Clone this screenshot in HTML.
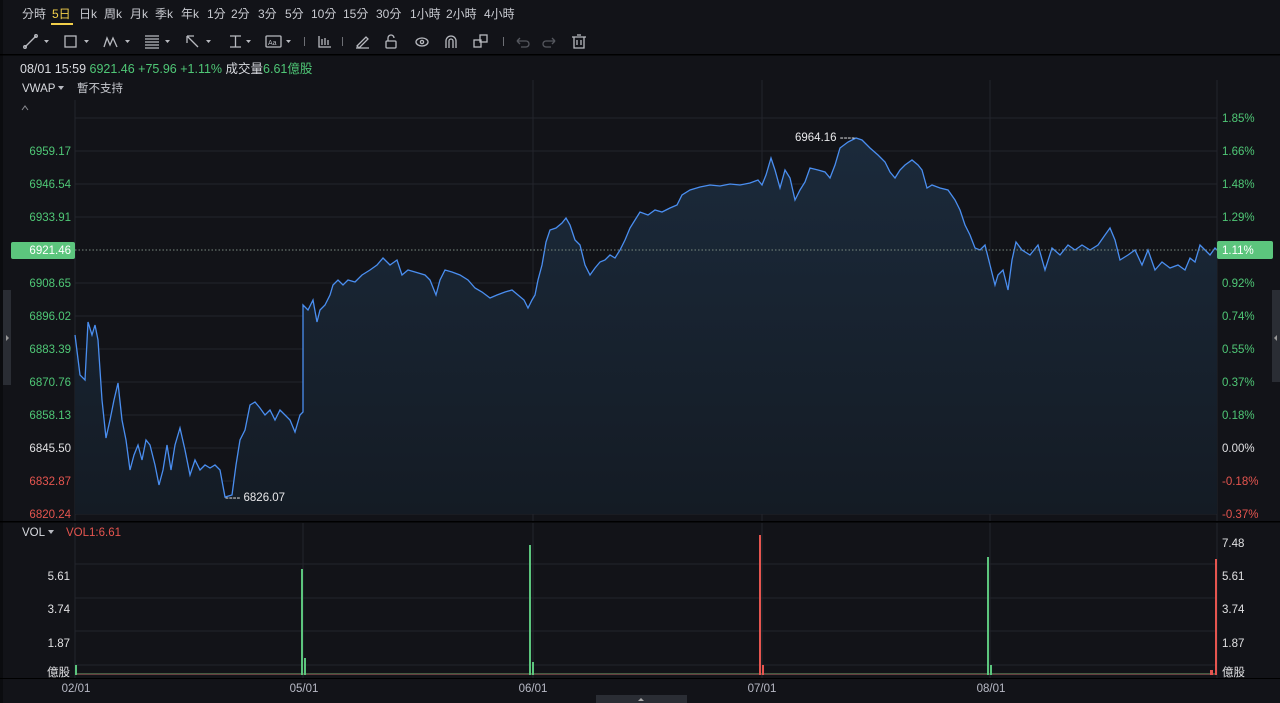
<!DOCTYPE html>
<html><head><meta charset="utf-8"><style>
html,body{margin:0;padding:0;background:#121318;width:1280px;height:703px;overflow:hidden;font-family:"Liberation Sans","Noto Sans CJK TC",sans-serif;}
svg{display:block}
text{font-family:"Liberation Sans","Noto Sans CJK TC",sans-serif;}
</style></head><body>
<svg width="1280" height="703" viewBox="0 0 1280 703" xmlns="http://www.w3.org/2000/svg">
<defs>
<linearGradient id="g" x1="0" y1="0" x2="0" y2="1"><stop offset="0" stop-color="#1b2a3b"/><stop offset="1" stop-color="#141b24"/></linearGradient>
</defs>
<rect width="1280" height="703" fill="#121318"/>
<rect x="0" y="0" width="3" height="703" fill="#0b0c0f"/>
<g font-size="12" fill="#c8cad0">
<text x="22" y="18">分時</text>
<text x="52" y="18" fill="#f2cf4a">5日</text>
<text x="79" y="18">日k</text><text x="104" y="18">周k</text><text x="130" y="18">月k</text><text x="155" y="18">季k</text><text x="181" y="18">年k</text>
<text x="207" y="18">1分</text><text x="231" y="18">2分</text><text x="258" y="18">3分</text><text x="285" y="18">5分</text><text x="311" y="18">10分</text><text x="343" y="18">15分</text><text x="376" y="18">30分</text><text x="410" y="18">1小時</text><text x="446" y="18">2小時</text><text x="484" y="18">4小時</text>
</g>
<rect x="51" y="23" width="22" height="2" fill="#f2cf4a"/>
<g stroke="#b8bac0" fill="none" stroke-width="1.3">
<path d="M25 47 L36 36"/><circle cx="25" cy="47" r="1.3"/><circle cx="36" cy="36" r="1.3"/>
<rect x="65" y="36" width="11" height="11"/>
<path d="M104 47 L107 38 L110 45 L113 38 L117 47"/>
<path d="M145 36 H159 M145 39 H159 M145 42 H159 M145 45 H159 M145 48 H159"/>
<path d="M187 36 L198 47 M187 36 V43 M187 36 H194"/>
<path d="M230 36 H241 M235.5 36 V47 M230 47 H241"/>
<rect x="266" y="36" width="15" height="11" rx="1"/>
<path d="M319 36 V47 H331 M322 39 V45 M325 38 V45 M328 40 V45"/>
<path d="M357 46 L366 37 L368 39 L359 48 Z M356 48 H369"/>
<rect x="386" y="41" width="10" height="7" rx="1"/><path d="M388 41 V38 A3 3 0 0 1 394 38"/>
<ellipse cx="422" cy="42" rx="6" ry="4"/><circle cx="422" cy="42" r="1.6"/>
<path d="M446 48 V41 A5 5 0 0 1 456 41 V48 M449 48 V41 A2 2 0 0 1 453 41 V48"/>
<rect x="474" y="40" width="7" height="7"/><rect x="480" y="35" width="7" height="7"/>
<path d="M574 37 V48 H584 V37 M572 37 H586 M577 35 H581 M577 40 V45 M581 40 V45"/>
</g>
<g stroke="#55575e" fill="none" stroke-width="1.3"><path d="M517 41 H526 A3 3 0 0 1 526 47 H521 M517 41 L520 38 M517 41 L520 44"/><path d="M555 41 H546 A3 3 0 0 0 546 47 H551 M555 41 L552 38 M555 41 L552 44"/></g>
<g fill="#b8bac0">
<path d="M44 40 h5 l-2.5 3z M84 40 h5 l-2.5 3z M125 40 h5 l-2.5 3z M165 40 h5 l-2.5 3z M206 40 h5 l-2.5 3z M246 40 h5 l-2.5 3z M286 40 h5 l-2.5 3z"/>
<text x="268" y="45" font-size="7">Aa</text></g>
<g fill="#6d6f75"><rect x="304" y="37" width="1" height="9"/><rect x="342" y="37" width="1" height="9"/><rect x="503" y="37" width="1" height="9"/></g>
<rect x="0" y="54" width="1280" height="1.5" fill="#000"/>
<text x="20" y="73" font-size="12.5" fill="#d8dadf">08/01 15:59 <tspan fill="#4fc776">6921.46 +75.96 +1.11%</tspan> 成交量<tspan fill="#4fc776">6.61億股</tspan></text>
<text x="22" y="92" font-size="11.5" fill="#d8dadf">VWAP</text><path d="M58 86 L64 86 L61 90Z" fill="#b8bac0"/>
<text x="77" y="92" font-size="11.5" fill="#c8cad0">暫不支持</text>
<path d="M22 110 L25 106 L28 110" stroke="#8a8c92" fill="none"/>
<g stroke="#23252c" stroke-width="1">
<path d="M75 118H1217M75 151H1217M75 184H1217M75 217H1217M75 283H1217M75 316H1217M75 349H1217M75 382H1217M75 415H1217M75 448H1217M75 481H1217M75 514H1217"/>
<path d="M75 100V522M533 80V522M762 80V522M990 80V522M75 523V678M533 523V678M762 523V678M990 523V678M303 523V678"/>
<path d="M1217 80V522M1217 523V678"/>
<path d="M75 564H1217M75 598H1217M75 631H1217M75 665H1217"/>
</g>
<rect x="0" y="521" width="1280" height="1.5" fill="#000"/>
<rect x="0" y="678" width="1280" height="1" fill="#000"/>
<g opacity="0.07" fill="none" stroke="#fff" stroke-width="3"><circle cx="586" cy="302" r="26"/></g>
<text x="626" y="298" font-size="21" font-weight="bold" fill="#fff" opacity="0.07">TIGER</text>
<text x="626" y="322" font-size="21" font-weight="bold" fill="#fff" opacity="0.07">BROKERS</text>
<path fill="url(#g)" stroke="none" d="M75 335 L80 375 L85 380 L88 322 L92 335 L95 325 L98 340 L102 400 L106 438 L110 420 L114 400 L118 383 L122 420 L126 440 L130 470 L134 455 L138 445 L142 460 L146 440 L150 445 L155 465 L159 485 L163 470 L167 445 L171 470 L175 445 L180 428 L185 450 L190 475 L195 460 L200 470 L205 465 L210 468 L215 465 L220 470 L225 497 L232 495 L236 465 L240 440 L245 430 L250 405 L255 402 L260 408 L265 415 L270 410 L275 420 L280 410 L285 415 L290 420 L295 432 L300 415 L303 412 L303 305 L308 310 L313 300 L317 322 L320 310 L325 305 L330 295 L333 285 L338 280 L343 285 L348 280 L355 282 L362 275 L370 270 L377 265 L383 258 L390 265 L397 260 L402 275 L408 270 L415 272 L425 275 L430 280 L436 295 L440 280 L445 270 L452 272 L460 275 L468 280 L475 288 L482 292 L490 298 L497 295 L505 292 L512 290 L518 295 L524 300 L528 308 L532 300 L535 295 L538 280 L542 265 L546 242 L550 230 L556 228 L562 223 L566 218 L570 225 L575 240 L580 245 L585 265 L590 275 L595 268 L600 262 L605 260 L610 255 L615 258 L620 250 L625 240 L630 228 L635 220 L640 212 L648 215 L655 210 L662 212 L670 208 L677 205 L682 195 L690 190 L700 187 L710 185 L720 186 L730 184 L740 185 L750 183 L758 180 L762 185 L766 175 L771 158 L775 170 L780 188 L785 170 L790 178 L795 200 L800 190 L805 182 L810 168 L818 170 L825 172 L830 178 L835 165 L840 148 L848 142 L856 138 L862 140 L870 148 L878 155 L885 162 L890 172 L895 178 L900 170 L905 165 L912 160 L918 165 L922 170 L927 188 L932 185 L940 188 L948 190 L955 200 L960 210 L965 225 L970 235 L975 248 L980 250 L985 245 L990 265 L995 285 L998 275 L1003 270 L1008 290 L1012 260 L1016 242 L1022 250 L1030 255 L1038 245 L1045 270 L1052 248 L1060 255 L1068 245 L1075 250 L1082 245 L1090 250 L1098 245 L1105 235 L1110 228 L1115 240 L1120 260 L1128 255 L1135 250 L1142 265 L1148 250 L1155 270 L1162 262 L1170 268 L1178 265 L1185 270 L1190 258 L1195 262 L1200 245 L1205 250 L1210 255 L1215 248 L1217 250 L1217 514 L75 514 Z"/>
<path fill="none" stroke="#4a8ef0" stroke-width="1.3" d="M75 335 L80 375 L85 380 L88 322 L92 335 L95 325 L98 340 L102 400 L106 438 L110 420 L114 400 L118 383 L122 420 L126 440 L130 470 L134 455 L138 445 L142 460 L146 440 L150 445 L155 465 L159 485 L163 470 L167 445 L171 470 L175 445 L180 428 L185 450 L190 475 L195 460 L200 470 L205 465 L210 468 L215 465 L220 470 L225 497 L232 495 L236 465 L240 440 L245 430 L250 405 L255 402 L260 408 L265 415 L270 410 L275 420 L280 410 L285 415 L290 420 L295 432 L300 415 L303 412 L303 305 L308 310 L313 300 L317 322 L320 310 L325 305 L330 295 L333 285 L338 280 L343 285 L348 280 L355 282 L362 275 L370 270 L377 265 L383 258 L390 265 L397 260 L402 275 L408 270 L415 272 L425 275 L430 280 L436 295 L440 280 L445 270 L452 272 L460 275 L468 280 L475 288 L482 292 L490 298 L497 295 L505 292 L512 290 L518 295 L524 300 L528 308 L532 300 L535 295 L538 280 L542 265 L546 242 L550 230 L556 228 L562 223 L566 218 L570 225 L575 240 L580 245 L585 265 L590 275 L595 268 L600 262 L605 260 L610 255 L615 258 L620 250 L625 240 L630 228 L635 220 L640 212 L648 215 L655 210 L662 212 L670 208 L677 205 L682 195 L690 190 L700 187 L710 185 L720 186 L730 184 L740 185 L750 183 L758 180 L762 185 L766 175 L771 158 L775 170 L780 188 L785 170 L790 178 L795 200 L800 190 L805 182 L810 168 L818 170 L825 172 L830 178 L835 165 L840 148 L848 142 L856 138 L862 140 L870 148 L878 155 L885 162 L890 172 L895 178 L900 170 L905 165 L912 160 L918 165 L922 170 L927 188 L932 185 L940 188 L948 190 L955 200 L960 210 L965 225 L970 235 L975 248 L980 250 L985 245 L990 265 L995 285 L998 275 L1003 270 L1008 290 L1012 260 L1016 242 L1022 250 L1030 255 L1038 245 L1045 270 L1052 248 L1060 255 L1068 245 L1075 250 L1082 245 L1090 250 L1098 245 L1105 235 L1110 228 L1115 240 L1120 260 L1128 255 L1135 250 L1142 265 L1148 250 L1155 270 L1162 262 L1170 268 L1178 265 L1185 270 L1190 258 L1195 262 L1200 245 L1205 250 L1210 255 L1215 248 L1217 250"/>
<path d="M75 250H1217" stroke="#7a8a80" stroke-dasharray="1.5 2" stroke-width="1"/>
<text x="795" y="141" font-size="11.5" fill="#e8e8ea">6964.16 ----</text>
<text x="225" y="501" font-size="11.5" fill="#e8e8ea">---- 6826.07</text>
<g font-size="11.5" fill="#4fc776" text-anchor="end">
<text x="71" y="155">6959.17</text><text x="71" y="188">6946.54</text><text x="71" y="221">6933.91</text><text x="71" y="287">6908.65</text><text x="71" y="320">6896.02</text><text x="71" y="353">6883.39</text><text x="71" y="386">6870.76</text><text x="71" y="419">6858.13</text>
<text x="71" y="452" fill="#e0e0e2">6845.50</text>
<text x="71" y="485" fill="#e5554f">6832.87</text><text x="71" y="518" fill="#e5554f">6820.24</text>
</g>
<rect x="11" y="242" width="64" height="17" rx="2" fill="#5cc57d"/>
<text x="71" y="254" font-size="11.5" fill="#fff" text-anchor="end">6921.46</text>
<g font-size="11.5" fill="#4fc776">
<text x="1222" y="122">1.85%</text><text x="1222" y="155">1.66%</text><text x="1222" y="188">1.48%</text><text x="1222" y="221">1.29%</text><text x="1222" y="287">0.92%</text><text x="1222" y="320">0.74%</text><text x="1222" y="353">0.55%</text><text x="1222" y="386">0.37%</text><text x="1222" y="419">0.18%</text>
<text x="1222" y="452" fill="#e0e0e2">0.00%</text>
<text x="1222" y="485" fill="#e5554f">-0.18%</text><text x="1222" y="518" fill="#e5554f">-0.37%</text>
</g>
<rect x="1217" y="241" width="56" height="18" rx="2" fill="#5cc57d"/>
<text x="1222" y="254" font-size="11.5" fill="#fff">1.11%</text>
<rect x="3" y="290" width="8" height="95" fill="#2a2d34"/><path d="M6 335 L9 338 L6 341Z" fill="#999"/>
<rect x="1272" y="290" width="8" height="92" fill="#2a2d34"/><path d="M1277 335 L1274 338 L1277 341Z" fill="#999"/>
<text x="22" y="536" font-size="11.5" fill="#d8dadf">VOL</text><path d="M48 530 L54 530 L51 534Z" fill="#b8bac0"/>
<text x="66" y="536" font-size="11.5" fill="#e5554f">VOL1:6.61</text>
<g font-size="11.5" fill="#e0e0e2" text-anchor="end">
<text x="70" y="580">5.61</text><text x="70" y="613">3.74</text><text x="70" y="647">1.87</text><text x="70" y="676">億股</text>
</g>
<g font-size="11.5" fill="#e0e0e2">
<text x="1222" y="547">7.48</text><text x="1222" y="580">5.61</text><text x="1222" y="613">3.74</text><text x="1222" y="647">1.87</text><text x="1222" y="676">億股</text>
</g>
<rect x="75" y="673" width="1142" height="2" fill="#7a4a4a" opacity="0.8"/>
<rect x="75" y="673" width="1142" height="1" fill="#2f6f45" opacity="0.6"/>
<g fill="#5cc57d">
<rect x="75" y="665" width="2" height="10"/>
<rect x="301" y="569" width="2" height="106"/><rect x="304" y="658" width="2" height="17"/>
<rect x="529" y="545" width="2" height="130"/><rect x="532" y="662" width="2" height="13"/>
<rect x="987" y="557" width="2" height="118"/><rect x="990" y="665" width="2" height="10"/>
</g>
<g fill="#e5554f">
<rect x="759" y="535" width="2" height="140"/><rect x="762" y="665" width="2" height="10"/>
<rect x="1215" y="559" width="2" height="116"/><rect x="1210" y="670" width="3" height="5"/>
</g>
<g font-size="11.5" fill="#b8bac6" text-anchor="middle">
<text x="76" y="692">02/01</text><text x="304" y="692">05/01</text><text x="533" y="692">06/01</text><text x="762" y="692">07/01</text><text x="991" y="692">08/01</text>
</g>
<rect x="596" y="695" width="91" height="8" fill="#2a2d34"/><path d="M638 701 L641 698 L644 701Z" fill="#aaa"/>
</svg>
</body></html>
